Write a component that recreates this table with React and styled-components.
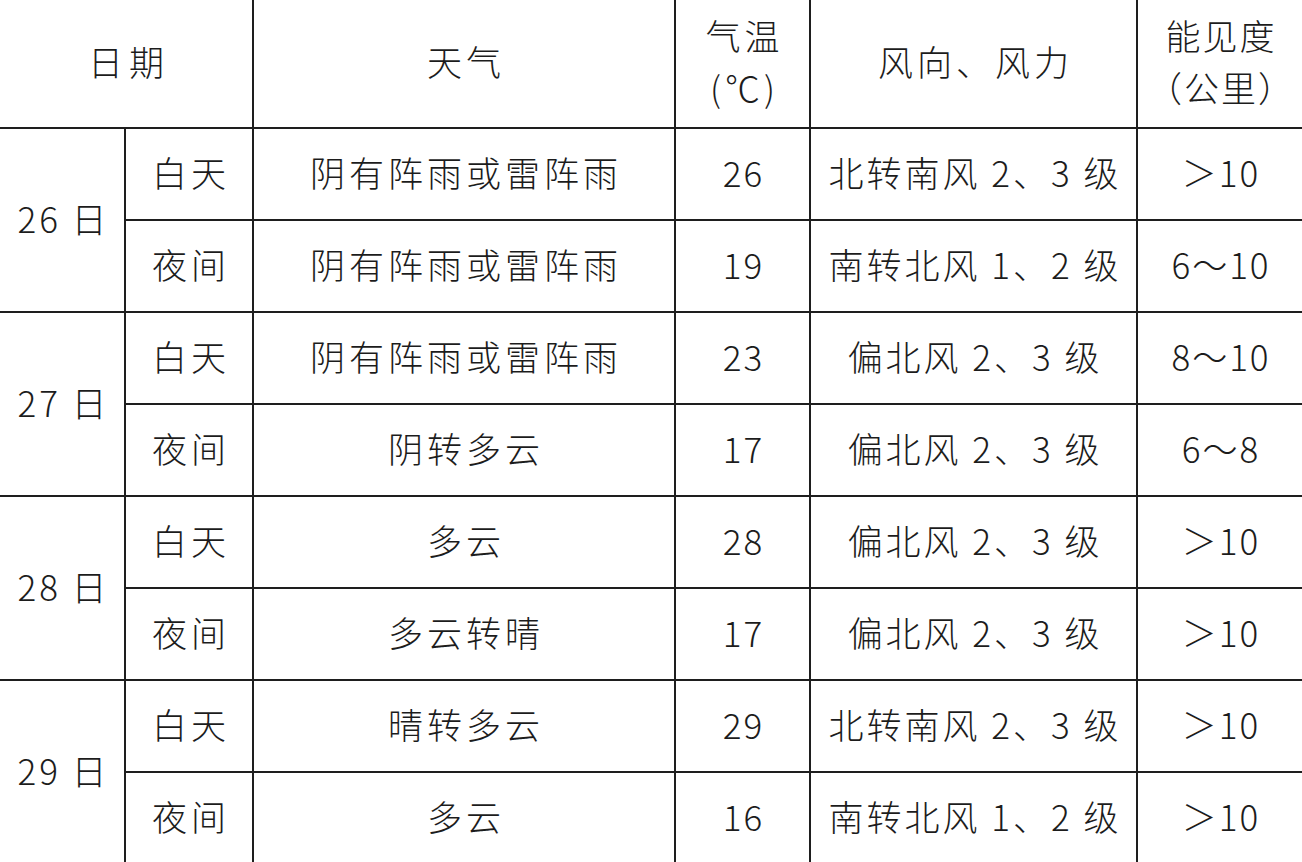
import React from 'react'
import styled, { createGlobalStyle } from 'styled-components'

const Global = createGlobalStyle`
  html, body {
    margin: 0;
    padding: 0;
    background: #ffffff;
    overflow: hidden;
  }
`

const Table = styled.table`
  width: 1302px;
  table-layout: fixed;
  border-collapse: collapse;
  border-style: hidden; /* no outer frame, the picture is cropped inside it */
  font-family: 'Noto Sans CJK SC', 'Liberation Sans', sans-serif;
  font-weight: 300;
  color: #1c1c1c;
`

const HeadRow = styled.tr`
  height: 128px;
`

const Row = styled.tr`
  height: 92px;
`

const Cell = styled.td`
  border: 2px solid #1e1e1e;
  padding: 0 0 5px ${(p) => p.$spacing ?? 4}px;
  text-align: center;
  vertical-align: middle;
  font-size: 35px;
  letter-spacing: ${(p) => p.$spacing ?? 4}px;
  line-height: 52px;
  white-space: nowrap;
  overflow: hidden;
`

const HeadCell = styled(Cell).attrs({ as: 'th' })`
  font-weight: 300;
`

const columns = [125, 128, 422, 135, 327, 165]

const days = [
  {
    date: '26 日',
    rows: [
      ['白天', '阴有阵雨或雷阵雨', '26', '北转南风 2、3 级', '＞10'],
      ['夜间', '阴有阵雨或雷阵雨', '19', '南转北风 1、2 级', '6～10'],
    ],
  },
  {
    date: '27 日',
    rows: [
      ['白天', '阴有阵雨或雷阵雨', '23', '偏北风 2、3 级', '8～10'],
      ['夜间', '阴转多云', '17', '偏北风 2、3 级', '6～8'],
    ],
  },
  {
    date: '28 日',
    rows: [
      ['白天', '多云', '28', '偏北风 2、3 级', '＞10'],
      ['夜间', '多云转晴', '17', '偏北风 2、3 级', '＞10'],
    ],
  },
  {
    date: '29 日',
    rows: [
      ['白天', '晴转多云', '29', '北转南风 2、3 级', '＞10'],
      ['夜间', '多云', '16', '南转北风 1、2 级', '＞10'],
    ],
  },
]

export default function App() {
  return (
    <>
      <Global />
      <Table>
        <colgroup>
          {columns.map((w, i) => (
            <col key={i} style={{ width: w }} />
          ))}
        </colgroup>
        <thead>
          <HeadRow>
            <HeadCell colSpan={2} $spacing={6}>日期</HeadCell>
            <HeadCell>天气</HeadCell>
            <HeadCell>
              气温
              <br />
              (℃)
            </HeadCell>
            <HeadCell>风向、风力</HeadCell>
            <HeadCell $spacing={2}>
              能见度
              <br />
              （公里）
            </HeadCell>
          </HeadRow>
        </thead>
        <tbody>
          {days.map((day) =>
            day.rows.map((r, i) => (
              <Row key={day.date + i}>
                {i === 0 && (
                  <Cell rowSpan={2} $spacing={3}>
                    {day.date}
                  </Cell>
                )}
                <Cell>{r[0]}</Cell>
                <Cell>{r[1]}</Cell>
                <Cell $spacing={2}>{r[2]}</Cell>
                <Cell $spacing={3}>{r[3]}</Cell>
                <Cell $spacing={2}>{r[4]}</Cell>
              </Row>
            ))
          )}
        </tbody>
      </Table>
    </>
  )
}
